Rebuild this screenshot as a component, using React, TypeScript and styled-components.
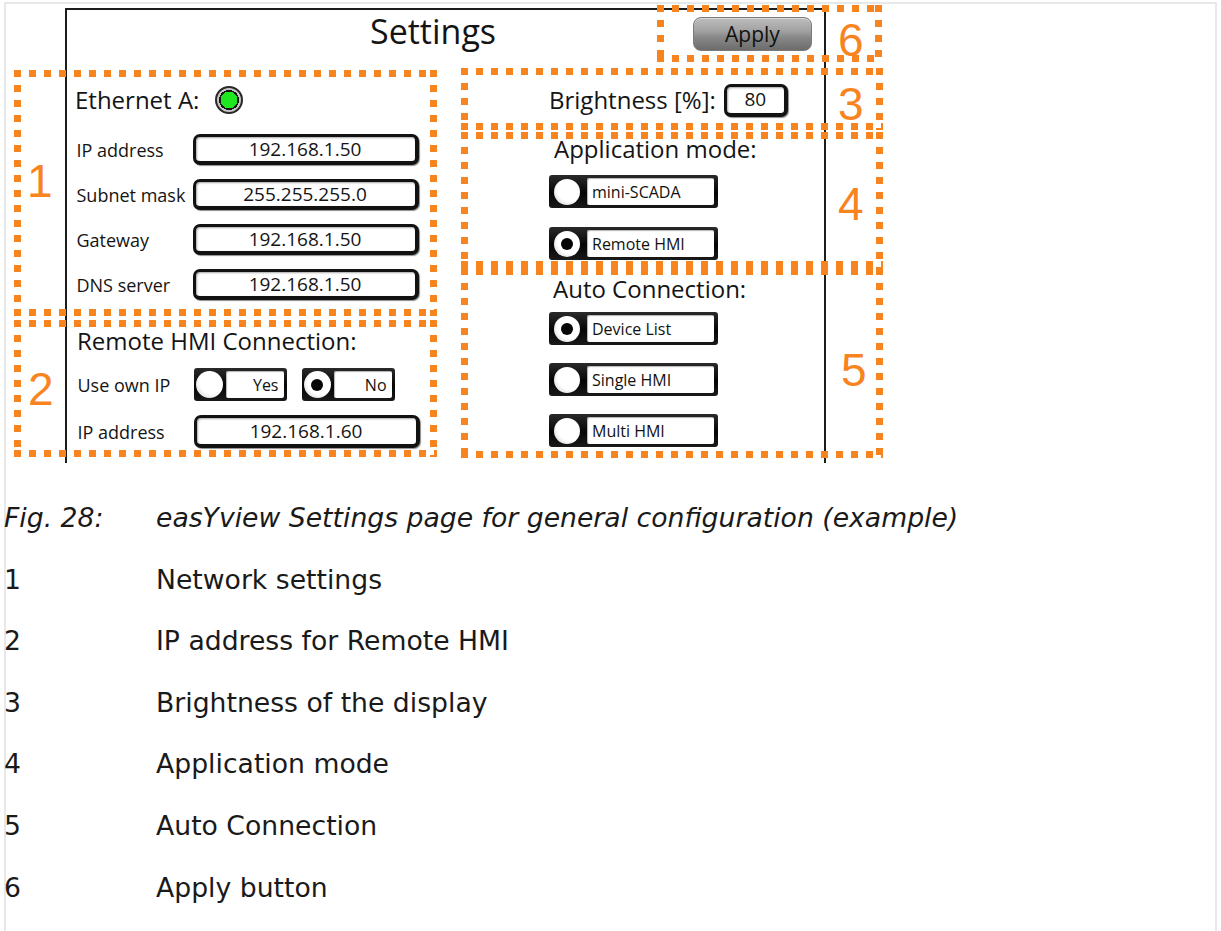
import React from "react";
import styled, { createGlobalStyle } from "styled-components";

const Global = createGlobalStyle`
  html, body { margin: 0; padding: 0; background: #ffffff; }
  body { font-family: "Open Sans", "Noto Sans", sans-serif; }
`;

const ORANGE = "#f7841f";

const Page = styled.div`
  margin: 2px 0 0 4px;
  width: 1213px;
  min-height: 929px;
  box-sizing: border-box;
  box-shadow: inset 2px 0 0 #e8e8e8, inset -2px 0 0 #e8e8e8, inset 0 2px 0 #e8e8e8;
`;

const Figure = styled.div`
  position: relative;
  height: 461px;
  padding-top: 6px;
  box-sizing: border-box;
`;

const Screen = styled.div`
  margin-left: 61px;
  width: 761px;
  height: 455px;
  box-sizing: border-box;
  border: 2px solid #1c1c1c;
  border-bottom: none;
  display: flex;
  flex-direction: column;
  font-family: "Open Sans", "Noto Sans", sans-serif;
  color: #141414;
`;

const Header = styled.div`
  height: 63px;
  display: flex;
  align-items: flex-start;
`;

const Title = styled.div`
  margin: 4px 0 0 303px;
  font-size: 34px;
  line-height: 1;
`;

const ApplyButton = styled.div`
  margin: 7px 12px 0 auto;
  width: 119px;
  height: 34px;
  box-sizing: border-box;
  border-radius: 8px;
  border: 1px solid #7a7a7a;
  background: linear-gradient(to bottom, #bdbdbd 0%, #a2a2a2 40%, #888888 60%, #6c6c6c 100%);
  box-shadow: inset 0 1px 0 rgba(255, 255, 255, 0.45);
  display: flex;
  align-items: center;
  justify-content: center;
  font-size: 21px;
  color: #111;
`;

const Body = styled.div`
  display: grid;
  grid-template-columns: 373px 1fr;
`;

const LeftCol = styled.div`
  display: flex;
  flex-direction: column;
  padding-left: 8px;
`;

const RightCol = styled.div`
  display: flex;
  flex-direction: column;
  padding-left: 109px;
`;

const Row = styled.div<{ $h: number; $mt?: number; $pl?: number }>`
  height: ${(p) => p.$h}px;
  margin-top: ${(p) => p.$mt ?? 0}px;
  padding-left: ${(p) => p.$pl ?? 0}px;
  display: flex;
  align-items: center;
`;

const Heading = styled.span`
  font-size: 24px;
  line-height: 1;
  white-space: nowrap;
`;

const Led = styled.span`
  margin-left: 16px;
  width: 28px;
  height: 28px;
  box-sizing: border-box;
  border-radius: 50%;
  border: 2px solid #2a2a2a;
  background: radial-gradient(circle, #1fe61f 0 8.5px, #151515 8.5px 10px, #c6c6c6 10px 12px);
`;

const FieldLabel = styled.span`
  width: 116px;
  flex: none;
  font-size: 18px;
  line-height: 1;
  white-space: nowrap;
`;

const ValueBox = styled.div<{ $w: number; $h: number; $ml?: number }>`
  width: ${(p) => p.$w}px;
  height: ${(p) => p.$h}px;
  margin-left: ${(p) => p.$ml ?? 0}px;
  box-sizing: border-box;
  border: 3px solid #121212;
  border-bottom-width: 4px;
  border-right-width: 4px;
  border-radius: 7px;
  background: #fff;
  box-shadow: inset 1px 1px 2px rgba(0, 0, 0, 0.35), 1px 1px 1px rgba(0, 0, 0, 0.45);
  display: flex;
  align-items: center;
  justify-content: center;
  font-size: 19px;
  line-height: 1;
`;

const ToggleGroup = styled.div`
  display: flex;
  gap: 15px;
`;

const OptionButton = styled.div<{ $w: number; $pl: number; $pr: number }>`
  width: ${(p) => p.$w}px;
  height: 33px;
  box-sizing: border-box;
  padding: 0 ${(p) => p.$pr}px 0 ${(p) => p.$pl}px;
  border-radius: 3px;
  background: linear-gradient(to bottom, #2a2a2a, #050505 55%, #1a1a1a);
  display: flex;
  align-items: center;
`;

const RadioDot = styled.span<{ $size: number; $on?: boolean }>`
  position: relative;
  flex: none;
  width: ${(p) => p.$size}px;
  height: ${(p) => p.$size}px;
  border-radius: 50%;
  background: radial-gradient(circle at 62% 38%, #ffffff 0 55%, #e2e2e2 78%, #a8a8a8 100%);
  display: flex;
  align-items: center;
  justify-content: center;
  &::after {
    content: "";
    display: ${(p) => (p.$on ? "block" : "none")};
    width: 12px;
    height: 12px;
    border-radius: 50%;
    background: #050505;
  }
`;

const OptionLabel = styled.span<{ $ml: number; $align: "left" | "right" }>`
  flex: 1;
  margin-left: ${(p) => p.$ml}px;
  height: 27px;
  box-sizing: border-box;
  border-radius: 2px;
  background: #fff;
  box-shadow: inset 1px 1px 1px rgba(0, 0, 0, 0.3);
  display: flex;
  align-items: center;
  justify-content: ${(p) => (p.$align === "right" ? "flex-end" : "flex-start")};
  padding: 0 5px;
  font-size: 16px;
  line-height: 1;
  color: #111;
  white-space: nowrap;
`;

const RadioList = styled.div<{ $gap: number; $mt: number }>`
  display: flex;
  flex-direction: column;
  gap: ${(p) => p.$gap}px;
  margin-top: ${(p) => p.$mt}px;
`;

const AnnotBox = styled.div<{ $x: number; $y: number; $w: number; $h: number }>`
  position: absolute;
  left: ${(p) => p.$x}px;
  top: ${(p) => p.$y}px;
  width: ${(p) => p.$w}px;
  height: ${(p) => p.$h}px;
  pointer-events: none;
  background:
    linear-gradient(90deg, ${ORANGE} 7px, transparent 7px) 0 0 / 15px 7px repeat-x,
    linear-gradient(90deg, ${ORANGE} 7px, transparent 7px) 0 100% / 15px 7px repeat-x,
    linear-gradient(180deg, ${ORANGE} 7px, transparent 7px) 0 0 / 7px 15px repeat-y,
    linear-gradient(180deg, ${ORANGE} 7px, transparent 7px) 100% 0 / 7px 15px repeat-y;
`;

const AnnotNum = styled.span<{ $x: number; $y: number }>`
  position: absolute;
  left: ${(p) => p.$x}px;
  top: ${(p) => p.$y}px;
  font-family: "Liberation Sans", Arial, sans-serif;
  font-size: 46px;
  line-height: 1;
  color: ${ORANGE};
`;

const Legend = styled.div`
  margin-top: 24px;
  display: grid;
  grid-template-columns: 152px 1fr;
  font-family: "DejaVu Sans", "Liberation Sans", sans-serif;
  font-size: 26.67px;
  line-height: 61.6px;
  color: #1a1a1a;
`;

const LegendCell = styled.div<{ $italic?: boolean }>`
  font-style: ${(p) => (p.$italic ? "italic" : "normal")};
  white-space: nowrap;
`;

const annotBoxes = [
  { x: 10, y: 68, w: 423, h: 246 },
  { x: 10, y: 318, w: 423, h: 137 },
  { x: 457, y: 66, w: 422, h: 62 },
  { x: 457, y: 130, w: 422, h: 136 },
  { x: 457, y: 266, w: 422, h: 190 },
  { x: 653, y: 3, w: 225, h: 57 },
];

const annotNums = [
  { n: "1", x: 23, y: 156 },
  { n: "2", x: 24, y: 364 },
  { n: "3", x: 834, y: 79 },
  { n: "4", x: 834, y: 179 },
  { n: "5", x: 837, y: 345 },
  { n: "6", x: 834, y: 15 },
];

const networkRows = [
  { label: "IP address", value: "192.168.1.50" },
  { label: "Subnet mask", value: "255.255.255.0" },
  { label: "Gateway", value: "192.168.1.50" },
  { label: "DNS server", value: "192.168.1.50" },
];

const legend = [
  ["1", "Network settings"],
  ["2", "IP address for Remote HMI"],
  ["3", "Brightness of the display"],
  ["4", "Application mode"],
  ["5", "Auto Connection"],
  ["6", "Apply button"],
];

function Radio({ label, on }: { label: string; on?: boolean }) {
  return (
    <OptionButton $w={169} $pl={5} $pr={4}>
      <RadioDot $size={26} $on={on} />
      <OptionLabel $ml={7} $align="left">{label}</OptionLabel>
    </OptionButton>
  );
}

function Toggle({ label, on }: { label: string; on?: boolean }) {
  return (
    <OptionButton $w={93} $pl={2} $pr={3}>
      <RadioDot $size={27} $on={on} />
      <OptionLabel $ml={3} $align="right">{label}</OptionLabel>
    </OptionButton>
  );
}

export default function App() {
  return (
    <>
      <Global />
      <Page>
        <Figure>
          <Screen>
            <Header>
              <Title>Settings</Title>
              <ApplyButton>Apply</ApplyButton>
            </Header>
            <Body>
              <LeftCol>
                <Row $h={54}>
                  <Heading>Ethernet A:</Heading>
                  <Led />
                </Row>
                {networkRows.map((r) => (
                  <Row key={r.label} $h={45} $pl={1.5}>
                    <FieldLabel>{r.label}</FieldLabel>
                    <ValueBox $w={226} $h={31}>{r.value}</ValueBox>
                  </Row>
                ))}
                <Row $h={40} $mt={14} $pl={2}>
                  <Heading>Remote HMI Connection:</Heading>
                </Row>
                <Row $h={47} $pl={2.5}>
                  <FieldLabel>Use own IP</FieldLabel>
                  <ToggleGroup>
                    <Toggle label="Yes" />
                    <Toggle label="No" on />
                  </ToggleGroup>
                </Row>
                <Row $h={47} $pl={2.5}>
                  <FieldLabel>IP address</FieldLabel>
                  <ValueBox $w={226} $h={33}>192.168.1.60</ValueBox>
                </Row>
              </LeftCol>
              <RightCol>
                <Row $h={54}>
                  <Heading>Brightness [%]:</Heading>
                  <ValueBox $w={64} $h={33} $ml={8}>80</ValueBox>
                </Row>
                <Row $h={43} $pl={5}>
                  <Heading>Application mode:</Heading>
                </Row>
                <RadioList $gap={19} $mt={5}>
                  <Radio label="mini-SCADA" />
                  <Radio label="Remote HMI" on />
                </RadioList>
                <Row $h={40} $mt={9} $pl={4}>
                  <Heading>Auto Connection:</Heading>
                </Row>
                <RadioList $gap={18} $mt={3}>
                  <Radio label="Device List" on />
                  <Radio label="Single HMI" />
                  <Radio label="Multi HMI" />
                </RadioList>
              </RightCol>
            </Body>
          </Screen>
          {annotBoxes.map((b, i) => (
            <AnnotBox key={i} $x={b.x} $y={b.y} $w={b.w} $h={b.h} />
          ))}
          {annotNums.map((a) => (
            <AnnotNum key={a.n} $x={a.x} $y={a.y}>{a.n}</AnnotNum>
          ))}
        </Figure>
        <Legend>
          <LegendCell $italic>Fig. 28:</LegendCell>
          <LegendCell $italic>easYview Settings page for general configuration (example)</LegendCell>
          {legend.map(([n, t]) => (
            <React.Fragment key={n}>
              <LegendCell>{n}</LegendCell>
              <LegendCell>{t}</LegendCell>
            </React.Fragment>
          ))}
        </Legend>
      </Page>
    </>
  );
}
